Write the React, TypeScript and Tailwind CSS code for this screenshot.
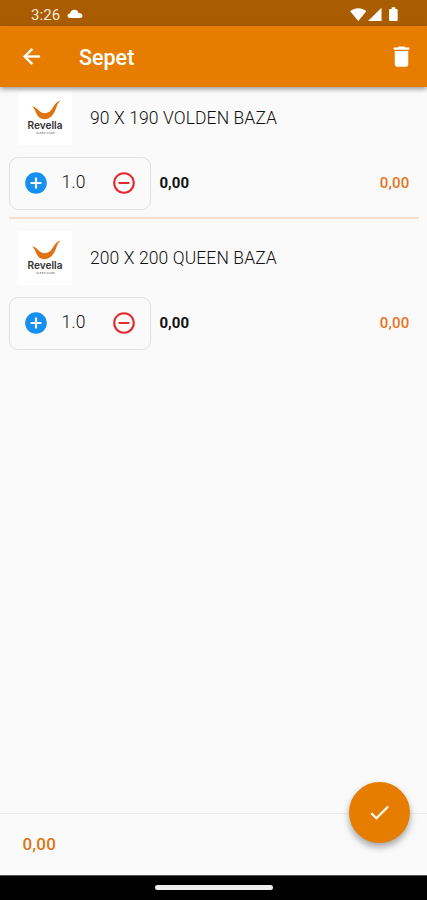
import React from "react";

const mdPath = {
  back: "M20 11H7.83l5.59-5.59L12 4l-8 8 8 8 1.41-1.41L7.83 13H20v-2z",
  trash: "M6 19c0 1.1.9 2 2 2h8c1.1 0 2-.9 2-2V7H6v12zM19 4h-3.5l-1-1h-5l-1 1H5v2h14V4z",
  add: "M12 2C6.48 2 2 6.48 2 12s4.48 10 10 10 10-4.48 10-10S17.52 2 12 2zm5 11h-4v4h-2v-4H7v-2h4V7h2v4h4v2z",
  remove:
    "M7 11v2h10v-2H7zm5-9C6.48 2 2 6.48 2 12s4.48 10 10 10 10-4.48 10-10S17.52 2 12 2zm0 18c-4.41 0-8-3.59-8-8s3.59-8 8-8 8 3.59 8 8-3.59 8-8 8z",
  check: "M9 16.17L4.83 12l-1.42 1.41L9 19 21 7l-1.41-1.41z",
};

function Icon({ d, size, className = "" }: { d: string; size: number; className?: string }) {
  return (
    <svg viewBox="0 0 24 24" width={size} height={size} fill="currentColor" className={`shrink-0 ${className}`}>
      <path d={d} />
    </svg>
  );
}

function Logo() {
  return (
    <div className="h-[54px] w-[54px] shrink-0 bg-white">
      <svg viewBox="0 0 54 54" width="54" height="54">
        <path
          d="M14 15.3C17.500 15.900 19.500 18.500 22 20.600C25 23 29.500 22.800 32.500 19.800C36 16.300 36.500 10.800 42.600 9.800C39.200 12 39 15.800 37 20C34.500 25.300 31 28.200 26.500 28.200C21.500 28.200 19.300 25 17.800 21.300C16.800 18.800 15.800 16.900 14 15.300Z"
          fill="#dd7411"
        />
        <text x="9.500" y="37.6" textLength="35" lengthAdjust="spacingAndGlyphs" fontSize="10.4" fontWeight="600" fill="#333" fontFamily="Inter, sans-serif">
          Revella
        </text>
        <text x="18" y="43.4" textLength="19" lengthAdjust="spacingAndGlyphs" fontSize="2.6" fontWeight="500" fill="#777" fontFamily="Inter, sans-serif">
          SLEEP CARE
        </text>
      </svg>
    </div>
  );
}

function CartItem({ name }: { name: string }) {
  return (
    <div className="h-[130px] pt-1">
      <div className="flex h-[54px] items-center pl-[9px]">
        <Logo />
        <span className="ml-[18px] whitespace-nowrap text-[17.5px] font-light leading-5 tracking-[0.1px] text-[#111]">{name}</span>
      </div>
      <div className="mt-3 flex items-center">
        <div className="flex h-[53px] w-[142px] items-center rounded-[9px] border border-[#e2e2e4] pb-[2px] pl-[12.5px]">
          <Icon d={mdPath.add} size={26} className="text-[#1590f0]" />
          <span className="-mt-[2px] ml-[13px] w-[49.5px] text-[17.5px] font-light leading-5 tracking-[0.2px] text-[#111]">1.0</span>
          <Icon d={mdPath.remove} size={26} className="text-[#e5282c]" />
        </div>
        <span className="-mt-[2px] ml-[8.5px] text-[15px] font-bold leading-5 text-[#111]">0,00</span>
        <span className="-mt-[2px] ml-auto mr-[9.5px] text-[15px] font-medium leading-5 tracking-[0.2px] text-[#e6731c]">0,00</span>
      </div>
    </div>
  );
}

export default function App() {
  return (
    <div className="flex h-[900px] w-[427px] flex-col overflow-hidden bg-[#fafafa] font-[Roboto,sans-serif]">
      <div className="flex h-[26px] shrink-0 items-center bg-[#aa5d00] pl-[31px] pr-[27px] text-white">
        <span className="mt-[3px] text-[15px] leading-5 tracking-[0.1px] text-[#f8e9da]">3:26</span>
        <svg viewBox="0 0 16 10" width="16" height="10" className="ml-[6.5px] mt-[2px]" fill="currentColor">
          <path d="M3.2 9C1.4 9 .4 8 .4 6.8c0-1.4 1.2-2.3 2.6-2.4C3.7 2 5.2.8 7.3.8c2.2 0 3.7 1.2 4.2 3.2 2.4.1 4 1.1 4 2.8C15.500 8.200 14.400 9 12.800 9z" />
        </svg>
        <svg viewBox="0 0 50 16" width="50" height="16" className="ml-auto mt-[3px]" fill="currentColor">
          <path d="M.2 4.200C4.500.300 12 .300 16.300 4.200L8.300 14z" />
          <path d="M18 14L31.500.800V14z" />
          <path d="M40 2h1.700V.300h3.700V2h1.400q.900 0 .900.900v10.200q0 .900-.900.900h-6.800q-.900 0-.900-.900V2.900q0-.900.900-.900z" />
        </svg>
      </div>
      <header className="relative z-10 flex h-[61px] shrink-0 items-center bg-[#e67c00] pl-[18.5px] pr-[12px] text-white shadow-[0_2px_5px_rgba(0,0,0,0.4)]">
        <Icon d={mdPath.back} size={25} className="stroke-white [stroke-width:0.4]" />
        <h1 className="ml-[35.5px] mt-[3px] text-[21.5px] font-medium leading-6">Sepet</h1>
        <Icon d={mdPath.trash} size={27} className="ml-auto" />
      </header>
      <main className="flex-1 pl-[9px] pr-[8px]">
        <CartItem name="90 X 190 VOLDEN BAZA" />
        <div className="mb-[8px] h-[2px] bg-[#f7dfd0]" />
        <CartItem name="200 X 200 QUEEN BAZA" />
      </main>
      <footer className="relative flex h-[62px] shrink-0 items-center border-t border-[#ececec] pl-[22.5px]">
        <span className="-mt-[2px] text-[17px] font-medium leading-5 tracking-[0.2px] text-[#dd7716]">0,00</span>
        <button className="absolute right-[17px] top-[-32px] flex h-[61px] w-[61px] items-center justify-center rounded-full bg-[#e67c00] text-white shadow-[0_4px_7px_rgba(0,0,0,0.35)]">
          <Icon d={mdPath.check} size={25} />
        </button>
      </footer>
      <div className="flex h-[25px] shrink-0 items-center justify-center border-t border-[#555] bg-black">
        <div className="-mt-px h-[5px] w-[118px] rounded-full bg-[#eee]" />
      </div>
    </div>
  );
}
